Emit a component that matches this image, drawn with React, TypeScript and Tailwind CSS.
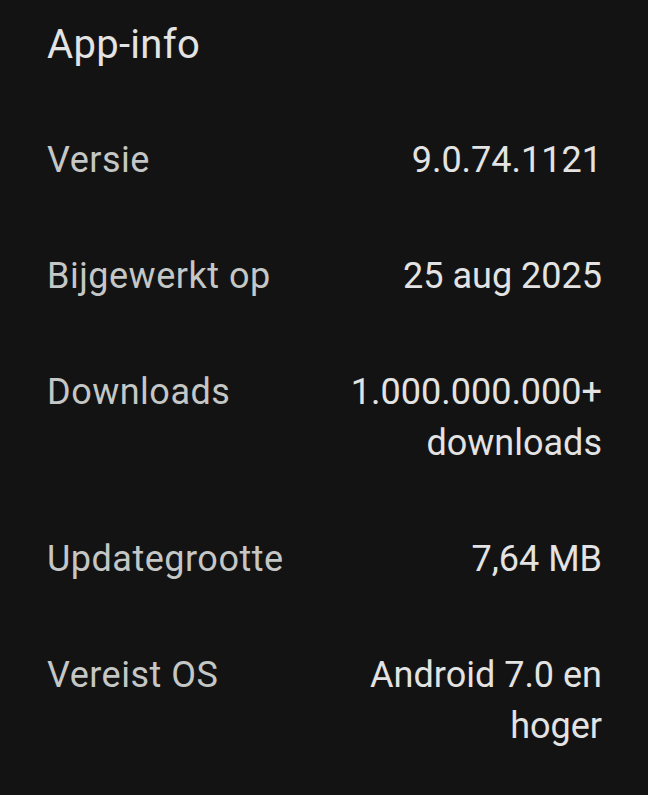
import React from "react";

const rows: { label: string; value: string }[] = [
  { label: "Versie", value: "9.0.74.1121" },
  { label: "Bijgewerkt op", value: "25 aug 2025" },
  { label: "Downloads", value: "1.000.000.000+ downloads" },
  { label: "Updategrootte", value: "7,64 MB" },
  { label: "Vereist OS", value: "Android 7.0 en hoger" },
];

export default function App() {
  return (
    <div
      className="min-h-screen bg-[#131313] pl-[47px] pr-[46px] pt-[19px]"
      style={{ fontFamily: "Roboto, 'Noto Sans', sans-serif" }}
    >
      <div className="flex flex-col gap-[65px]">
        {/* Title */}
        <h1 className="text-[40px] leading-[51px] tracking-[0.3px] text-[#e3e3e3]">
          App-info
        </h1>

        {rows.map((row) => (
          <div key={row.label} className="flex justify-between items-start">
            <span className="text-[36px] leading-[51px] tracking-[0.5px] text-[#c4c7c5]">
              {row.label}
            </span>
            <span className="w-[290px] text-right text-[36px] leading-[51px] text-[#e3e3e3]">
              {row.value}
            </span>
          </div>
        ))}
      </div>
    </div>
  );
}
